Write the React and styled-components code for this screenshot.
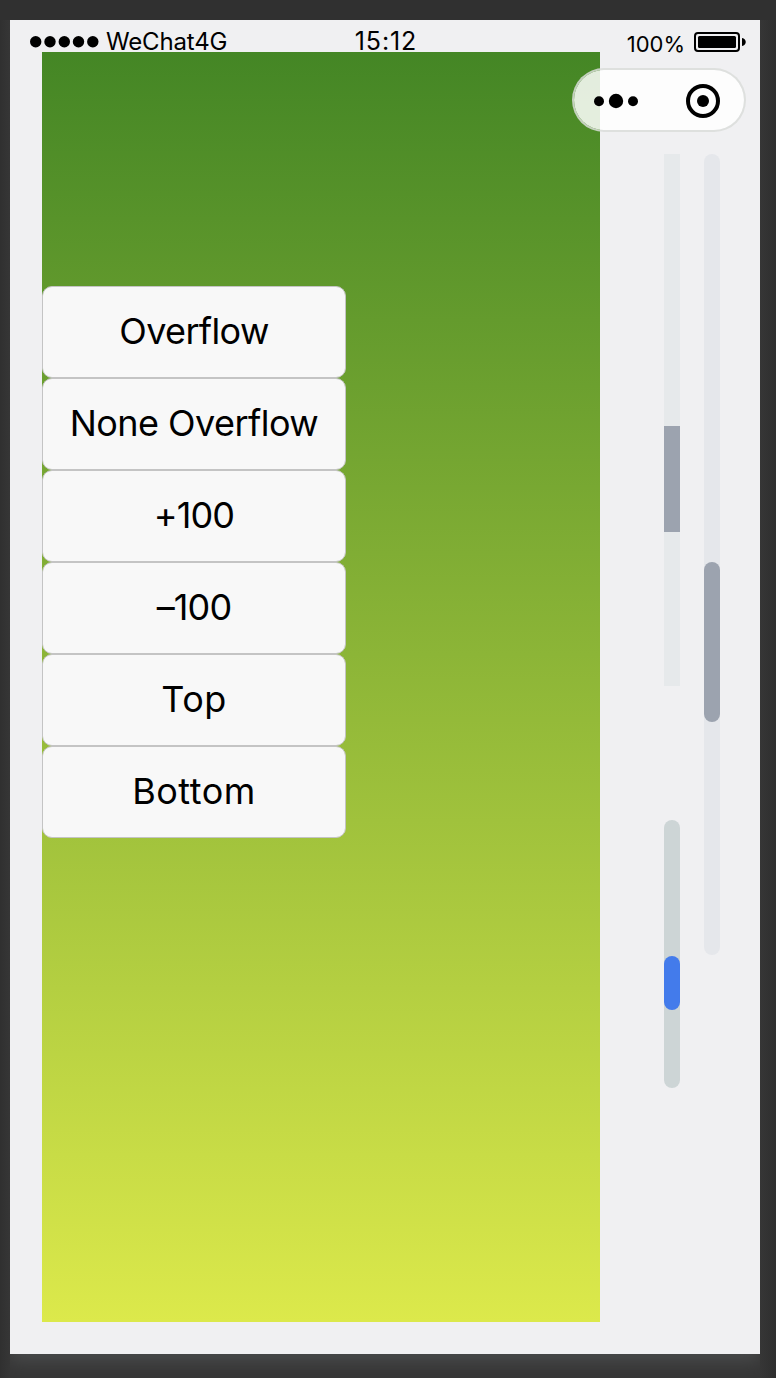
import React from 'react';
import styled, { createGlobalStyle } from 'styled-components';

const GlobalStyle = createGlobalStyle`
  * { box-sizing: border-box; }
  body { margin: 0; background: #303030; font-family: Inter, "Liberation Sans", sans-serif; color: #000; }
`;

const Stage = styled.div`
  height: 1378px;
  padding: 20px 16px 24px 10px;
  background:
    linear-gradient(#303030, #303030) top / 100% 20px no-repeat,
    linear-gradient(to right, #303030 0, #363636 10px, #363636 760px, #2e2e2e 776px);
`;

const Phone = styled.main`
  position: relative;
  display: flex;
  flex-direction: column;
  width: 750px;
  height: 1334px;
  background: #f0f0f2;
  box-shadow: 0 8px 16px #494a4b;
  clip-path: inset(0 0 -24px 0);
`;

const StatusBar = styled.header`
  display: grid;
  grid-template-columns: 1fr auto 1fr;
  height: 32px;
  padding: 0 14px 0 20px;
  line-height: 32px;
  white-space: nowrap;
`;

const Carrier = styled.div`
  display: flex;
  align-items: center;
  height: 24px;
  margin-top: 10px;
  gap: 7px;
`;

const Signal = styled.svg`
  display: block;
  width: 69px;
  height: 12px;
`;

const StatusText = styled.span`
  font-size: ${p => p.$size}px;
  letter-spacing: ${p => p.$spacing}px;
  line-height: 24px;
`;

const Clock = styled.time`
  padding-top: 9px;
  line-height: 24px;
  font-size: 25px;
  letter-spacing: 0.9px;
  margin-right: 4px;
`;

const Power = styled.div`
  display: flex;
  justify-content: flex-end;
  align-items: center;
  gap: 9px;
  padding-top: 12px;
`;

const BatteryIcon = styled.svg`
  display: block;
  width: 52px;
  height: 20px;
  margin-top: -4px;
`;

const Content = styled.div`
  display: flex;
  height: 1270px;
  padding-left: 32px;
`;

const GradientPanel = styled.section`
  width: 558px;
  height: 1270px;
  padding-top: 234px;
  background: linear-gradient(#448625, #dce94b);
`;

const ButtonList = styled.div`
  display: flex;
  flex-direction: column;
  width: 304px;
`;

const ActionButton = styled.button`
  height: 92px;
  padding: 0 0 2px;
  border: 1px solid #c4c4c4;
  border-radius: 10px;
  background: #f8f8f8;
  color: #000;
  font: 400 36px/88px Inter, "Liberation Sans", sans-serif;
  letter-spacing: ${p => p.$spacing}px;
  white-space: nowrap;
`;

const Rails = styled.aside`
  display: flex;
  gap: 24px;
  padding: 102px 0 0 64px;
`;

const RailColumn = styled.div`
  display: flex;
  flex-direction: column;
  gap: 134px;
`;

const Track = styled.div`
  width: 16px;
  height: ${p => p.$height}px;
  padding-top: ${p => p.$offset}px;
  border-radius: ${p => p.$radius}px;
  background: ${p => p.$color};
`;

const Thumb = styled.div`
  height: ${p => p.$height}px;
  border-radius: ${p => p.$radius}px;
  background: ${p => p.$color};
`;

const Capsule = styled.nav`
  position: absolute;
  top: 48px;
  right: 14px;
  display: flex;
  align-items: center;
  justify-content: space-between;
  width: 174px;
  height: 64px;
  padding: 2px 24px 0 20px;
  border: 2px solid rgba(218, 221, 218, 0.85);
  border-radius: 32px;
  background: rgba(255, 255, 255, 0.85);
  background-clip: padding-box;
`;

const CapsuleIcon = styled.svg`
  display: block;
  width: ${p => p.$width}px;
  height: 34px;
`;

const actions = [
  { label: 'Overflow', spacing: -0.65 },
  { label: 'None Overflow', spacing: -0.55 },
  { label: '+100', spacing: -0.9 },
  { label: '–100', spacing: -0.9 },
  { label: 'Top', spacing: 0.5 },
  { label: 'Bottom', spacing: 0.5 },
];

export default function App() {
  return (
    <Stage>
      <GlobalStyle />
      <Phone>
        <StatusBar>
          <Carrier>
            <Signal viewBox="0 0 69 12">
              {[5.7, 20, 34.3, 48.5, 62.8].map(x => <circle key={x} cx={x} cy="5.7" r="5.7" />)}
            </Signal>
            <StatusText $size={24} $spacing={-0.15}>WeChat4G</StatusText>
          </Carrier>
          <Clock>15:12</Clock>
          <Power>
            <StatusText $size={22} $spacing={0}>100%</StatusText>
            <BatteryIcon viewBox="0 0 52 20">
              <rect x="1" y="1" width="44" height="18" rx="3" fill="none" stroke="#000" strokeWidth="2" />
              <rect x="4" y="4" width="38" height="12" rx="1.5" />
              <path d="M48 6c5 1 5 7 0 8z" />
            </BatteryIcon>
          </Power>
        </StatusBar>
        <Content>
          <GradientPanel>
            <ButtonList>
              {actions.map(a => (
                <ActionButton key={a.label} $spacing={a.spacing}>{a.label}</ActionButton>
              ))}
            </ButtonList>
          </GradientPanel>
          <Rails>
            <RailColumn>
              <Track $height={532} $offset={272} $radius={0} $color="#e6e9eb">
                <Thumb $height={106} $radius={0} $color="#9ca3af" />
              </Track>
              <Track $height={268} $offset={136} $radius={8} $color="#cdd5d6">
                <Thumb $height={54} $radius={8} $color="#437beb" />
              </Track>
            </RailColumn>
            <RailColumn>
              <Track $height={801} $offset={408} $radius={8} $color="#e5e7eb">
                <Thumb $height={160} $radius={8} $color="#9ca3af" />
              </Track>
            </RailColumn>
          </Rails>
        </Content>
        <Capsule>
          <CapsuleIcon $width={45} viewBox="0 0 45 34">
            <circle cx="5" cy="17.3" r="5" />
            <circle cx="22" cy="17" r="7.2" />
            <circle cx="39" cy="17.3" r="5" />
          </CapsuleIcon>
          <CapsuleIcon $width={34} viewBox="0 0 34 34">
            <circle cx="17" cy="17" r="15" fill="none" stroke="#000" strokeWidth="4" />
            <circle cx="17" cy="17" r="6" />
          </CapsuleIcon>
        </Capsule>
      </Phone>
    </Stage>
  );
}
